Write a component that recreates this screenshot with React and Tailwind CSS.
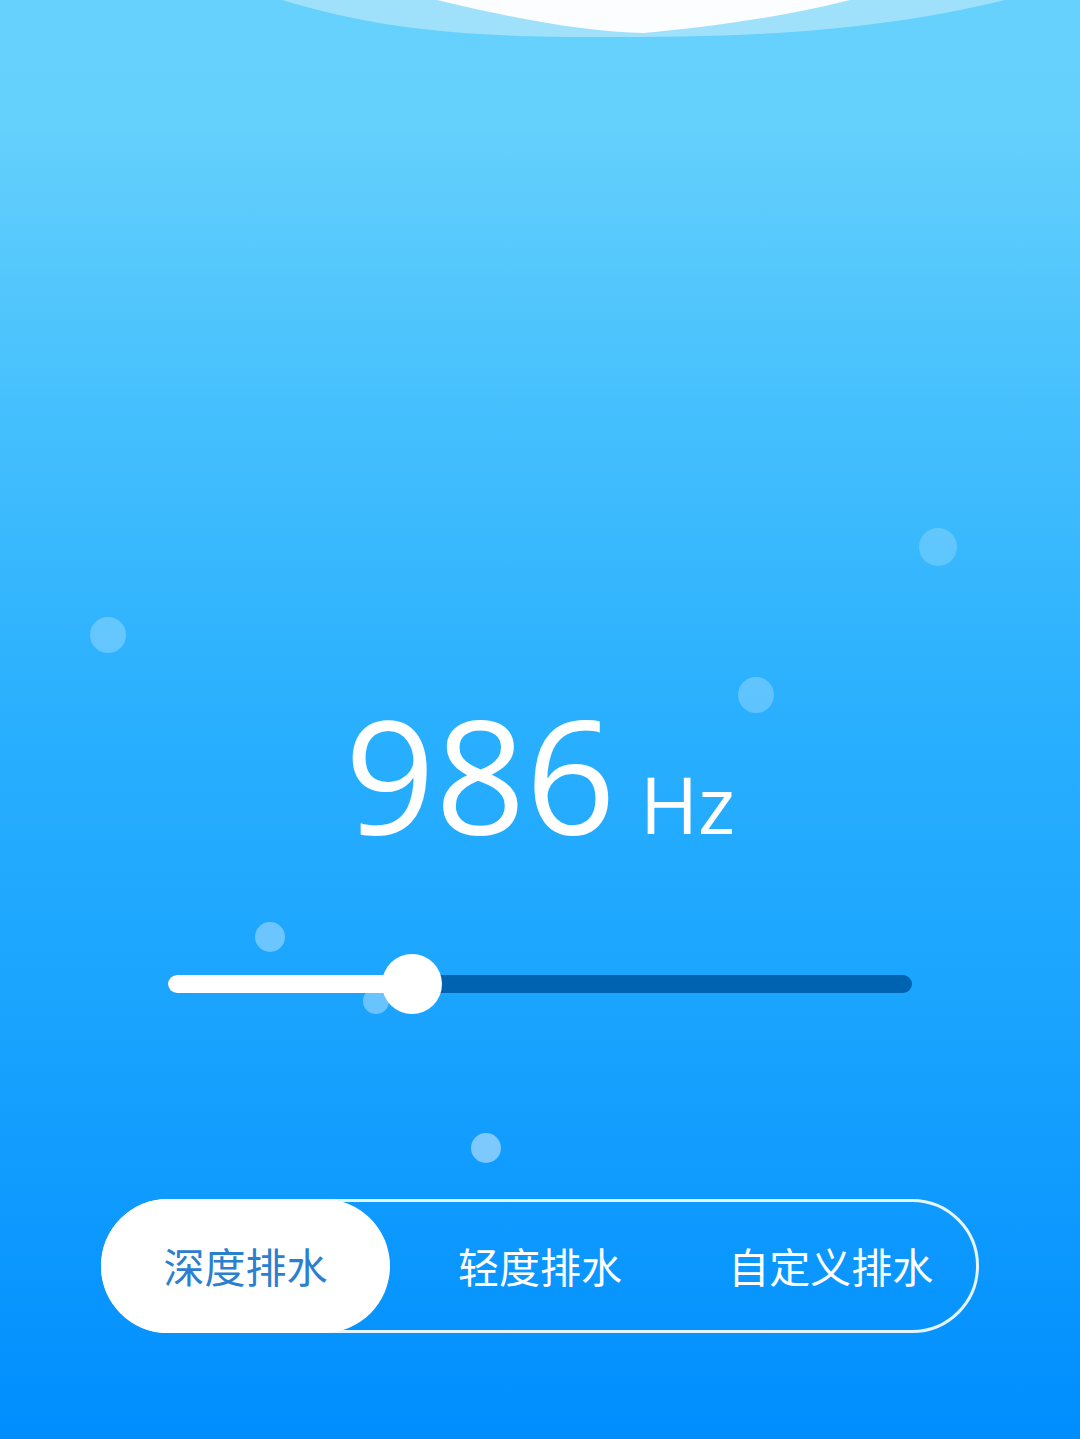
import React from "react";

const bubbles = [
  { x: 108, y: 635, r: 18, o: "bg-white/25" },
  { x: 938, y: 547, r: 19, o: "bg-white/20" },
  { x: 756, y: 695, r: 18, o: "bg-white/25" },
  { x: 270, y: 937, r: 15, o: "bg-white/35" },
  { x: 376, y: 1001, r: 13, o: "bg-white/35" },
  { x: 486, y: 1148, r: 15, o: "bg-white/45" },
];

export default function App() {
  const options = ["深度排水", "轻度排水", "自定义排水"];
  return (
    <div
      className="relative w-[1080px] h-[1439px] overflow-hidden bg-[linear-gradient(180deg,#66d1fc_0%,#64d0fc_9%,#46c0fd_28%,#2ab0fe_49%,#1aa4fe_70%,#008eff_100%)]"
      style={{ fontFamily: '"Open Sans", "Noto Sans", "Noto Sans CJK SC", sans-serif' }}
    >
      {/* top wave */}
      <svg className="absolute left-0 top-0" width="1080" height="60" viewBox="0 0 1080 60">
        <path d="M282 0 C 380 30, 470 37, 600 37 C 730 37, 860 35, 1005 0 Z" fill="#9fe1fb" />
        <path d="M437 0 C 520 20, 590 32, 644 33 C 700 28, 780 18, 850 0 Z" fill="#fbfdfe" />
      </svg>

      {bubbles.map((b, i) => (
        <div
          key={i}
          className={`absolute rounded-full ${b.o}`}
          style={{ left: b.x - b.r, top: b.y - b.r, width: b.r * 2, height: b.r * 2 }}
        />
      ))}

      <div className="relative flex flex-col items-center pt-[694px]">
        <div className="flex items-baseline text-white leading-none">
          <span className="text-[158px]">986</span>
          <span className="ml-[24px] text-[79px]">Hz</span>
        </div>

        <div className="relative mt-[123px] w-[744px] h-[18px] rounded-full bg-[#0063b2]">
          <div className="absolute left-0 top-0 h-[18px] w-[244px] rounded-full bg-white" />
          <div className="absolute left-[214px] top-[-21px] w-[60px] h-[60px] rounded-full bg-white" />
        </div>

        <div className="mt-[206px] w-[878px] h-[134px] rounded-full border-[3px] border-white/90 grid grid-cols-3 items-stretch">
          {options.map((o, i) => (
            <div
              key={o}
              className={`flex items-center justify-center rounded-full text-[41px] ${
                i === 0 ? "bg-white text-[#2a80cf] -ml-[3px] -my-[3px] w-[289px] justify-self-start" : "text-white"
              }`}
              style={{ fontFamily: '"Noto Sans CJK SC", sans-serif' }}
            >
              {o}
            </div>
          ))}
        </div>
      </div>
    </div>
  );
}
